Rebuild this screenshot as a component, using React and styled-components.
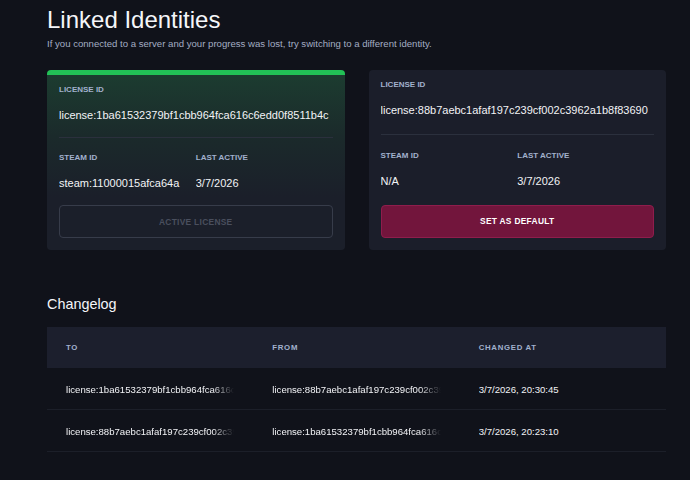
import React from 'react';
import styled, { createGlobalStyle } from 'styled-components';

const GlobalStyle = createGlobalStyle`
  html, body {
    margin: 0;
    padding: 0;
    background: #10121a;
  }
  body {
    font-family: "Liberation Sans", Arial, Helvetica, sans-serif;
    color: #f3f4f7;
  }
`;

const Page = styled.div`
  padding: 6px 24px 24px 47px;
  min-height: 480px;
  box-sizing: border-box;
`;

const Title = styled.h1`
  margin: 0;
  font-size: 24px;
  line-height: 28px;
  font-weight: 400;
  color: #f5f6f9;
`;

const Subtitle = styled.p`
  margin: 3px 0 0;
  font-size: 9.6px;
  line-height: 14px;
  color: #a3adc3;
`;

const CardGrid = styled.div`
  display: grid;
  grid-template-columns: 1fr 1fr;
  gap: 24px;
  margin-top: 19px;
`;

const Card = styled.div`
  height: 180px;
  box-sizing: border-box;
  display: flex;
  flex-direction: column;
  justify-content: space-between;
  padding: 10px 12px 12px;
  border-radius: 4px;
  background: ${(p) =>
    p.$active
      ? 'linear-gradient(180deg, #1c3c30 0%, #1b2a2b 35%, #1b1f2a 70%)'
      : '#1b1e2a'};
  border-top: ${(p) => (p.$active ? '5px solid #22c156' : 'none')};
`;

const Field = styled.div`
  display: flex;
  flex-direction: column;
  gap: ${(p) => p.$gap || 13}px;
`;

const Label = styled.div`
  font-size: 8px;
  line-height: 10px;
  font-weight: 700;
  text-transform: uppercase;
  color: #a2b1cd;
`;

const Value = styled.div`
  font-size: 11px;
  line-height: 14px;
  color: #f2f3f6;
  white-space: nowrap;
  overflow: hidden;
`;

const Divider = styled.div`
  height: 1px;
  background: #2b303d;
`;

const Columns = styled.div`
  display: grid;
  grid-template-columns: 1fr 1fr;
`;

const Button = styled.button`
  height: 33px;
  width: 100%;
  box-sizing: border-box;
  border-radius: 4px;
  font-family: inherit;
  font-size: 8.4px;
  font-weight: 700;
  letter-spacing: 0.3px;
  text-transform: uppercase;
  cursor: ${(p) => (p.disabled ? 'default' : 'pointer')};
  background: ${(p) => (p.$primary ? '#72153c' : 'transparent')};
  border: 1px solid ${(p) => (p.$primary ? '#8f1d4c' : '#373c4a')};
  color: ${(p) => (p.$primary ? '#ffffff' : '#4a4f5e')};
`;

const SectionTitle = styled.h2`
  margin: 45px 0 14px;
  font-size: 14.4px;
  line-height: 18px;
  font-weight: 400;
  color: #f5f6f9;
`;

const Table = styled.table`
  width: 100%;
  table-layout: fixed;
  border-collapse: collapse;
`;

const HeadCell = styled.th`
  height: 41px;
  padding: 0 19px;
  text-align: left;
  background: #1c1f2d;
  font-size: 7.8px;
  font-weight: 700;
  letter-spacing: 0.7px;
  text-transform: uppercase;
  color: #a2b1cd;
`;

const Row = styled.tr`
  border-bottom: 1px solid #1c1f29;
`;

const Cell = styled.td`
  height: 39px;
  padding: 2px 19px 0;
  font-size: 9.6px;
  color: #f2f3f6;
`;

const Clip = styled.div`
  white-space: nowrap;
  overflow: hidden;
  mask-image: ${(p) =>
    p.$fade ? 'linear-gradient(to right, #000 calc(100% - 22px), transparent)' : 'none'};
`;

const identities = [
  {
    license: 'license:1ba61532379bf1cbb964fca616c6edd0f8511b4c',
    steam: 'steam:11000015afca64a',
    lastActive: '3/7/2026',
    active: true,
  },
  {
    license: 'license:88b7aebc1afaf197c239cf002c3962a1b8f83690',
    steam: 'N/A',
    lastActive: '3/7/2026',
    active: false,
  },
];

const changelog = [
  { to: identities[0].license, from: identities[1].license, at: '3/7/2026, 20:30:45' },
  { to: identities[1].license, from: identities[0].license, at: '3/7/2026, 20:23:10' },
];

const IdentityCard = ({ identity }) => (
  <Card $active={identity.active}>
    <Field $gap={13}>
      <Label>License ID</Label>
      <Value>{identity.license}</Value>
    </Field>
    <Divider />
    <Columns>
      <Field>
        <Label>Steam ID</Label>
        <Value>{identity.steam}</Value>
      </Field>
      <Field>
        <Label>Last Active</Label>
        <Value>{identity.lastActive}</Value>
      </Field>
    </Columns>
    {identity.active ? (
      <Button disabled>Active License</Button>
    ) : (
      <Button $primary>Set as Default</Button>
    )}
  </Card>
);

const App = () => (
  <Page>
    <GlobalStyle />
    <Title>Linked Identities</Title>
    <Subtitle>
      If you connected to a server and your progress was lost, try switching to a different identity.
    </Subtitle>
    <CardGrid>
      {identities.map((id) => (
        <IdentityCard key={id.license} identity={id} />
      ))}
    </CardGrid>

    <SectionTitle>Changelog</SectionTitle>
    <Table>
      <thead>
        <tr>
          <HeadCell>To</HeadCell>
          <HeadCell>From</HeadCell>
          <HeadCell>Changed At</HeadCell>
        </tr>
      </thead>
      <tbody>
        {changelog.map((entry) => (
          <Row key={entry.at}>
            <Cell><Clip $fade>{entry.to}</Clip></Cell>
            <Cell><Clip $fade>{entry.from}</Clip></Cell>
            <Cell><Clip>{entry.at}</Clip></Cell>
          </Row>
        ))}
      </tbody>
    </Table>
  </Page>
);

export default App;
